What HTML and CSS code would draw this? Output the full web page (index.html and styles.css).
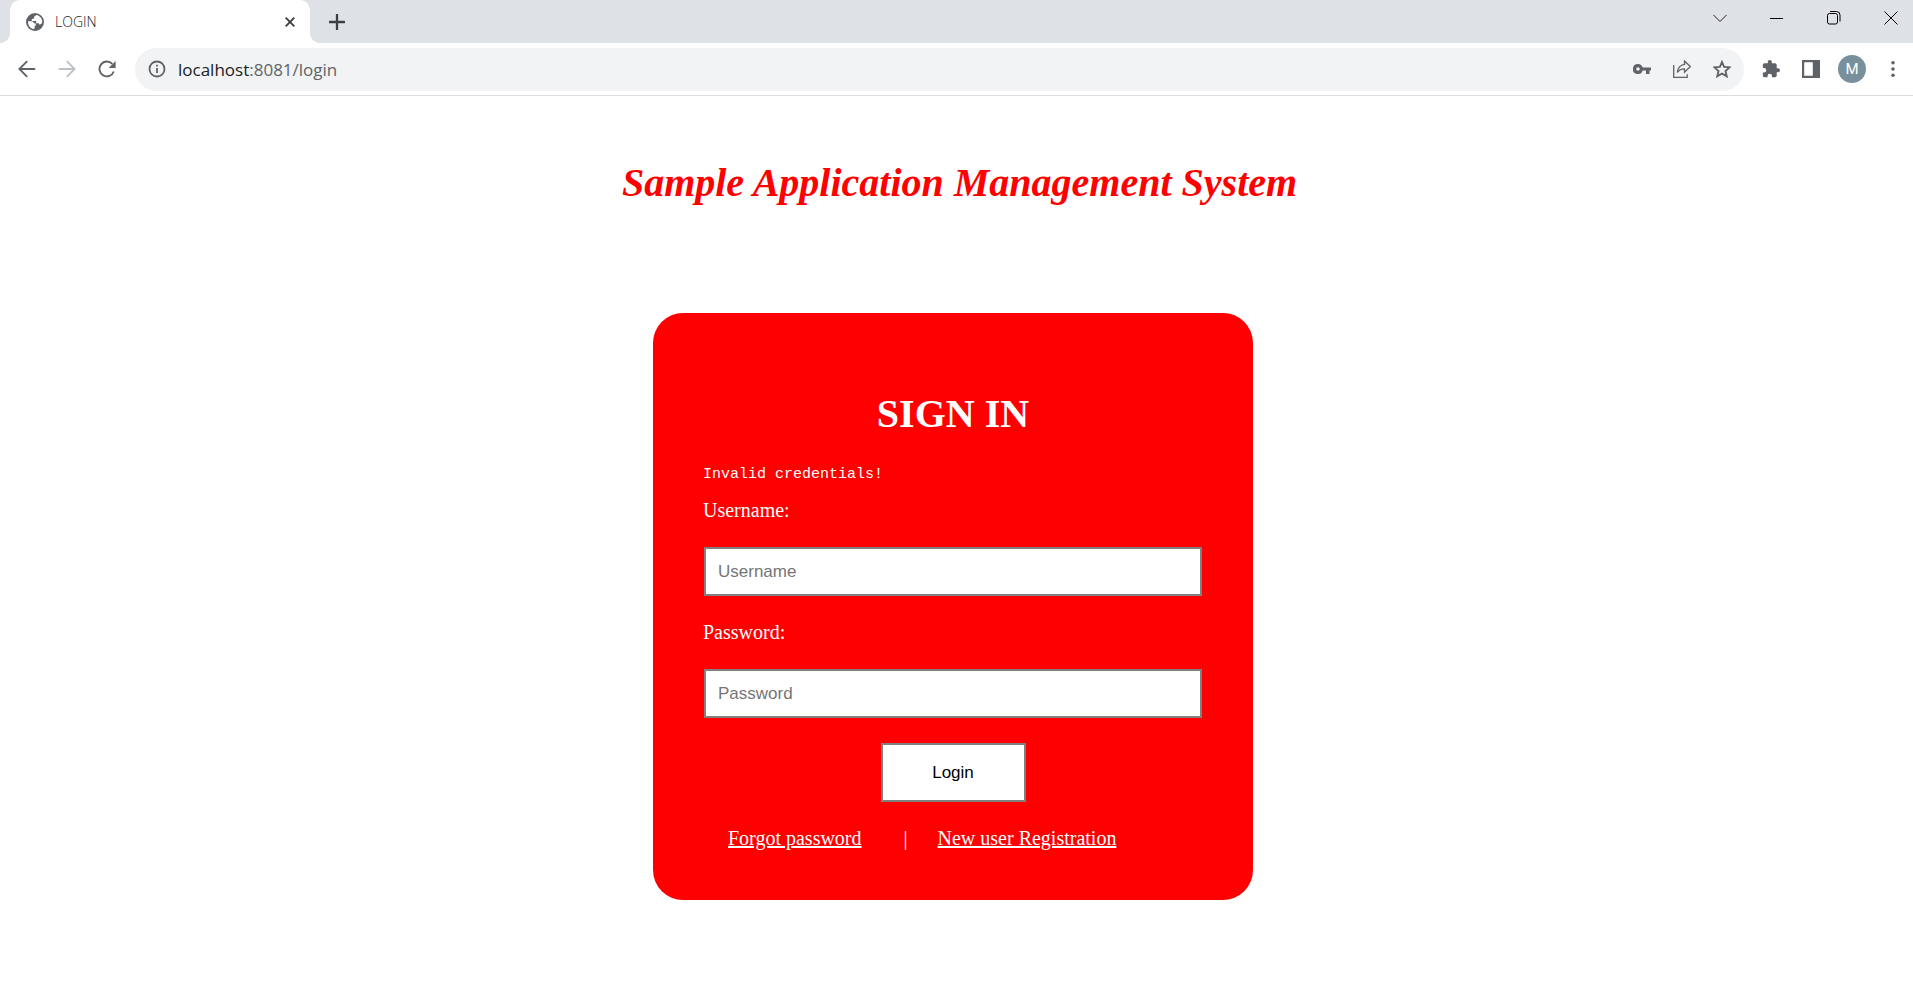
FILE: index.html
```html
<!DOCTYPE html>
<html lang="en">
<head>
<meta charset="utf-8">
<title>LOGIN</title>
<link rel="stylesheet" href="styles.css">
</head>
<body>
<header class="browser">
  <div class="tabstrip">
    <div class="tab">
      <svg class="ico18" viewBox="0 0 18 18"><circle cx="9" cy="9" r="9" fill="#5f6368"/><path d="M10.600 2 8.200 3.400v1.800L5.800 6.300v1.700h4.400v2.300h2.400l1.100 1.500 2.300-1.600.3-1.200c0-3.300-2.400-6.300-5.700-7zM2 8.200l4.200.1 2.400 2.200h1.200v1.900l-1.200.5v2.600l-.9.400C4.300 15.500 1.800 12.400 2 8.200z" fill="#fff"/></svg>
      <span class="tab-title">LOGIN</span>
      <button class="icon-btn" aria-label="Close tab"><svg width="10" height="10" viewBox="0 0 10 10"><path d="M.7.700l8.600 8.600M9.300.7L.7 9.300" stroke="#3c4043" stroke-width="1.900"/></svg></button>
    </div>
    <button class="icon-btn new-tab" aria-label="New tab"><svg width="16" height="16" viewBox="0 0 16 16"><path d="M8 .8v14.400M.8 8h14.400" stroke="#3c4043" stroke-width="2.300" stroke-linecap="round"/></svg></button>
    <div class="window-controls">
      <button class="icon-btn" aria-label="Search tabs"><svg width="14" height="14" viewBox="0 0 14 14"><path d="M.5 4 7 10.500 13.500 4" fill="none" stroke="#222"/></svg></button>
      <button class="icon-btn" aria-label="Minimize"><svg width="14" height="14" viewBox="0 0 14 14"><path d="M0 7.500h13" stroke="#000"/></svg></button>
      <button class="icon-btn" aria-label="Restore"><svg width="14" height="14" viewBox="0 0 14 14"><g fill="none" stroke="#000"><rect x=".5" y="2.500" width="10" height="10.500" rx="2"/><path d="M3 .5h6.500q3.500 0 3.500 3.500v6.500"/></g></svg></button>
      <button class="icon-btn" aria-label="Close"><svg width="14" height="14" viewBox="0 0 14 14"><path d="M.5.500l13 13M13.500.5l-13 13" stroke="#000"/></svg></button>
    </div>
  </div>
  <div class="toolbar">
    <nav class="nav">
      <button class="icon-btn" aria-label="Back"><svg class="ico18" viewBox="0 0 18 18"><path d="M16.500 9H2M8.700 1.700 1.400 9l7.300 7.300" fill="none" stroke="#5f6368" stroke-width="1.900" stroke-linecap="round"/></svg></button>
      <button class="icon-btn" aria-label="Forward"><svg class="ico18" viewBox="0 0 18 18"><path d="M1.500 9H16M9.300 1.700 16.600 9l-7.300 7.300" fill="none" stroke="#bdc1c6" stroke-width="1.900" stroke-linecap="round"/></svg></button>
      <button class="icon-btn" aria-label="Reload"><svg class="ico18" viewBox="0 0 18 18"><path d="M15.800 11.500A7.400 7.400 0 1 1 14.300 3.900" fill="none" stroke="#5f6368" stroke-width="1.900"/><path d="M17.600 1v7h-7z" fill="#5f6368"/></svg></button>
    </nav>
    <div class="omnibox">
      <svg class="ico18" viewBox="0 0 18 18"><circle cx="9" cy="9" r="7.500" fill="none" stroke="#5f6368" stroke-width="1.800"/><path d="M9 8v5M9 4.800v1.800" stroke="#5f6368" stroke-width="1.800"/></svg>
      <div class="url">localhost<span class="path">:8081/login</span></div>
      <button class="icon-btn" aria-label="Passwords"><svg class="ico18" viewBox="0 0 18 18"><path fill-rule="evenodd" d="M5 4a5 5 0 1 0 4.700 6.500H13V14h3.500v-3.500H18v-3H9.700A5 5 0 0 0 5 4zm0 3.200a1.800 1.800 0 1 1 0 3.600 1.800 1.800 0 0 1 0-3.600z" fill="#5f6368"/></svg></button>
      <button class="icon-btn" aria-label="Share"><svg class="ico18" viewBox="0 0 18 18"><g fill="none" stroke="#5f6368" stroke-width="1.300"><path d="M.7 5v12.300h13.500v-3"/><path d="M11.500 1 17.300 6.500l-5.800 5.600V8.800C8 8.800 6 9.800 4.300 12.500 4.800 8 7.500 5 11.500 4.400z"/></g></svg></button>
      <button class="icon-btn" aria-label="Bookmark"><svg class="ico18" viewBox="0 0 18 18"><path d="m9 2 2.100 4.900 5.400.5-4 3.600 1.200 5.300L9 13.500l-4.700 2.800L5.500 11l-4-3.600 5.400-.5z" fill="none" stroke="#5f6368" stroke-width="1.900"/></svg></button>
    </div>
    <div class="actions">
      <button class="icon-btn" aria-label="Extensions"><svg class="ico18" viewBox="1 1 22 22"><path d="M20.500 11H19V7c0-1.100-.9-2-2-2h-4V3.500a2.500 2.500 0 0 0-5 0V5H4c-1.100 0-2 .9-2 2v3.800h1.500a2.700 2.700 0 0 1 0 5.400H2V20c0 1.100.9 2 2 2h3.800v-1.500a2.700 2.700 0 0 1 5.400 0V22H17c1.100 0 2-.9 2-2v-4h1.500a2.500 2.500 0 0 0 0-5z" fill="#5f6368"/></svg></button>
      <button class="icon-btn" aria-label="Side panel"><svg class="ico18" viewBox="0 0 18 18"><path fill-rule="evenodd" d="M0 0h18v18H0zM2.200 2.200v13.600h8.600V2.200z" fill="#5f6368"/></svg></button>
      <button class="avatar" aria-label="Profile">M</button>
      <button class="icon-btn" aria-label="Menu"><svg class="ico18" viewBox="0 0 18 18" fill="#5f6368"><circle cx="9" cy="2.700" r="1.800"/><circle cx="9" cy="9" r="1.800"/><circle cx="9" cy="15.300" r="1.800"/></svg></button>
    </div>
  </div>
</header>
<main class="page">
  <h1 class="heading app-title">Sample Application Management System</h1>
  <div class="card-area">
    <form class="card">
      <h1 class="heading">SIGN IN</h1>
      <p class="error">Invalid credentials!</p>
      <div class="fields">
        <label for="username">Username:</label>
        <input class="field" id="username" type="text" placeholder="Username">
        <label for="password">Password:</label>
        <input class="field" id="password" type="password" placeholder="Password">
        <button class="login" type="button">Login</button>
        <div class="links"><a href="#">Forgot password</a><span class="divider">|</span><a href="#">New user Registration</a></div>
      </div>
    </form>
  </div>
</main>
</body>
</html>
```

FILE: styles.css
```css
* { box-sizing: border-box; }
body {
  margin: 0;
  background: #fff;
  font-family: "Liberation Serif", "Times New Roman", serif;
  font-size: 20px;
  line-height: 23px;
}
svg { display: block; flex: none; }
.ico18 { width: 18px; height: 18px; }
.icon-btn { display: flex; padding: 0; border: 0; background: none; }

.browser { font-family: "Open Sans", sans-serif; border-bottom: 1px solid #dadce0; }
.tabstrip {
  display: flex;
  align-items: center;
  height: 43px;
  padding: 0 15px 0 10px;
  background: #dee1e6;
}
.tab {
  position: relative;
  display: flex;
  align-items: center;
  gap: 11px;
  width: 300px;
  height: 43px;
  padding: 0 15px 0 16px;
  border-radius: 10px 10px 0 0;
  background: #fff;
}
.tab::before, .tab::after {
  content: "";
  position: absolute;
  bottom: 0;
  width: 10px;
  height: 10px;
}
.tab::before { right: 100%; background: radial-gradient(circle at 0 0, #dee1e6 10px, #fff 10px); }
.tab::after { left: 100%; background: radial-gradient(circle at 100% 0, #dee1e6 10px, #fff 10px); }
.tab-title { flex: 1; padding-bottom: 1px; color: #202124; font-size: 14px; font-weight: 300; }
.new-tab { margin-left: 19px; }
.window-controls { display: flex; gap: 43px; margin-left: auto; padding-bottom: 7px; }

.toolbar { display: flex; align-items: center; height: 52px; padding: 0 11px 0 18px; }
.nav { display: flex; gap: 22px; }
.omnibox {
  display: flex;
  flex: 1;
  align-items: center;
  gap: 22px;
  height: 43px;
  margin: 0 18px 0 19px;
  padding: 0 13px;
  border-radius: 22px;
  background: #f1f3f4;
}
.url { flex: 1; margin-left: -10px; color: #202124; font-size: 17px; }
.path { color: #5f6368; }
.actions { display: flex; align-items: center; gap: 22px; }
.avatar {
  width: 28px;
  height: 28px;
  margin: 0 -4px;
  padding: 0;
  border: 0;
  border-radius: 50%;
  background: #78909c;
  color: #fff;
  font: 15px Roboto, sans-serif;
}

.page { padding: 64px 0 40px; }
.heading { margin: 0; font-size: 40px; line-height: 46px; text-align: center; }
.app-title { padding-left: 6px; color: #f00; font-style: italic; }
.card-area { padding: 107px 7px 0 0; }
.card {
  width: 600px;
  max-width: 100%;
  margin: 0 auto;
  padding: 78px 50px 50px;
  border-radius: 30px;
  background: #f00;
  color: #fff;
}
.error { margin: 28px 0 14px; font: 15px/20px "Liberation Mono", monospace; }
.fields { display: flex; flex-direction: column; gap: 25px; }
.field, .login {
  border: 2px solid #808080;
  border-radius: 0;
  background: #fff;
  font: 17px "Liberation Sans", Arial, sans-serif;
}
.field { height: 49px; margin: 0 1px; padding: 0 12px; }
.field::placeholder { color: #757575; }
.login { align-self: center; width: 145px; height: 59px; color: #000; }
.links { padding-left: 25px; }
.links a { color: #fff; }
.divider { margin: 0 30px 0 42px; }
```
